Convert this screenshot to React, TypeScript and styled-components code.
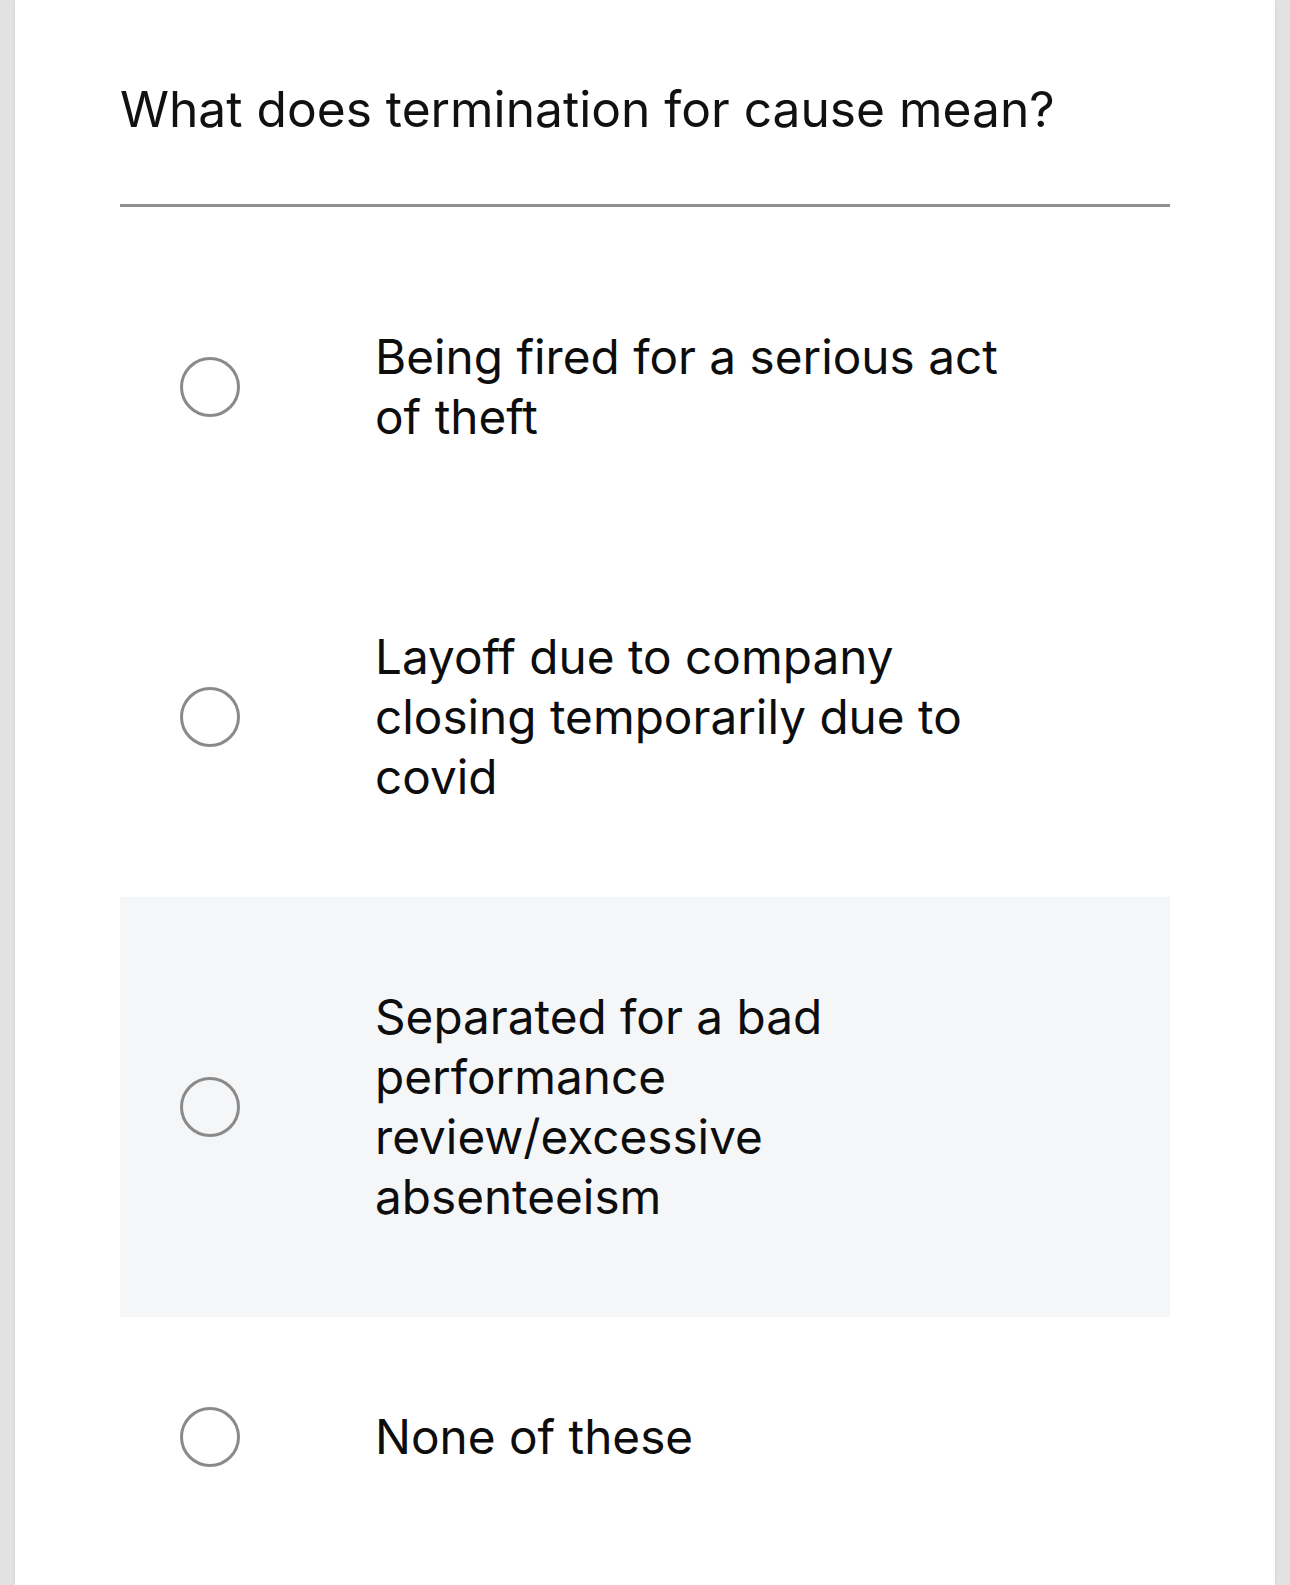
import React from "react";
import styled, { createGlobalStyle } from "styled-components";

const GlobalStyle = createGlobalStyle`
  html, body {
    margin: 0;
    padding: 0;
  }
  body {
    background: linear-gradient(90deg, #e2e2e2 0%, #ececec 50%, #e2e2e2 100%);
    font-family: Inter, "Noto Sans", "Liberation Sans", sans-serif;
    color: #111111;
  }
`;

const Card = styled.main`
  margin: 0 15px;
  min-height: 1585px;
  background: #ffffff;
  padding: 0 105px;
  box-sizing: border-box;
  box-shadow: 0 0 4px rgba(0, 0, 0, 0.08);
`;

const Question = styled.h1`
  margin: 0;
  padding: 78px 0 63px;
  font-size: 49.7px;
  font-weight: 400;
  line-height: 63px;
  border-bottom: 3px solid #8f8f8f;
`;

const Options = styled.div`
  display: flex;
  flex-direction: column;
  margin-top: 30px;
`;

const Row = styled.label<{ $active?: boolean }>`
  display: grid;
  grid-template-columns: 60px 1fr;
  column-gap: 135px;
  align-items: center;
  padding: 90px 0 90px 60px;
  background: ${(p) => (p.$active ? "#f5f6f8" : "transparent")};
`;

const Radio = styled.span`
  display: block;
  width: 60px;
  height: 60px;
  box-sizing: border-box;
  border: 3px solid #8a8a8a;
  border-radius: 50%;
  background: transparent;
`;

const Label = styled.span`
  max-width: 650px;
  font-size: 47.7px;
  line-height: 60px;
  font-weight: 400;
  color: #0d0d0d;
`;

const answers = [
  "Being fired for a serious act of theft",
  "Layoff due to company closing temporarily due to covid",
  "Separated for a bad performance review/excessive absenteeism",
  "None of these",
];

export default function App() {
  return (
    <>
      <GlobalStyle />
      <Card>
        <Question>What does termination for cause mean?</Question>
        <Options>
          {answers.map((a, i) => (
            <Row key={a} $active={i === 2}>
              <Radio />
              <Label>{a}</Label>
            </Row>
          ))}
        </Options>
      </Card>
    </>
  );
}
